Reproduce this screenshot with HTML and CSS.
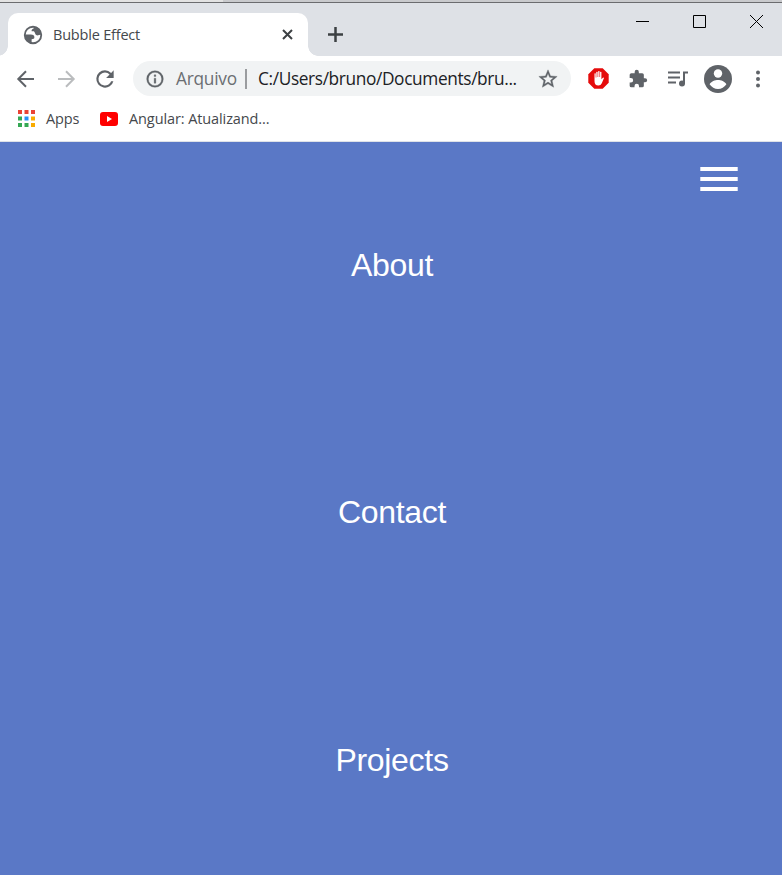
FILE: index.html
```html
<!DOCTYPE html>
<html lang="pt">
<head>
<meta charset="utf-8">
<title>Bubble Effect</title>
<link rel="stylesheet" href="styles.css">
</head>
<body>
<div class="window">
  <div class="edge"></div>
  <header class="tabstrip">
    <div class="tab">
      <svg class="globe" width="22" height="22" viewBox="0 0 24 24"><circle cx="12" cy="12" r="9" fill="none" stroke="#5f6368" stroke-width="2"/><path fill="#5f6368" d="M3 11.500h6.500c3 0 4 1 4 3.200 0 1.500-1 1.800-3 1.800v4.700A9.500 9.500 0 0 1 3 11.500zM13.500 3c.3 2.300-3.500 2-3 5h2.500c1.500 1 .8 3.500 3 4.300 2 .6 3.200-1 5.200-.3C21.200 7 18 3.500 13.500 3z"/></svg>
      <span class="tab-title">Bubble Effect</span>
      <svg class="tab-close" width="11" height="11" viewBox="0 0 11 11"><path d="M1 1l9 9M10 1l-9 9" stroke="#3c4043" stroke-width="2"/></svg>
    </div>
    <svg class="new-tab" width="15" height="15" viewBox="0 0 15 15"><path d="M7.500 0v15M0 7.500h15" stroke="#3c4043" stroke-width="2.500"/></svg>
    <div class="controls">
      <svg width="13" height="13" viewBox="0 0 13 13"><path d="M0 6.500h13" stroke="#000"/></svg>
      <svg width="13" height="13" viewBox="0 0 13 13"><path d="M.5.5h12v12H.5z" fill="none" stroke="#000"/></svg>
      <svg width="13" height="13" viewBox="0 0 13 13"><path d="M0 0l13 13M13 0L0 13" stroke="#000"/></svg>
    </div>
  </header>
  <nav class="toolbar">
    <svg class="back" width="24" height="24" viewBox="0 0 24 24"><path d="M20 12H4.800M12 4.300L4.300 12l7.700 7.700" fill="none" stroke="#5f6368" stroke-width="2"/></svg>
    <svg class="forward" width="24" height="24" viewBox="0 0 24 24"><path d="M4 12h15.200M12 4.300l7.700 7.700-7.700 7.700" fill="none" stroke="#babcbe" stroke-width="2"/></svg>
    <svg class="reload" width="26" height="26" viewBox="0 0 24 24"><path fill="#5f6368" d="M17.650 6.350A7.960 7.960 0 0 0 12 4a8 8 0 1 0 7.730 10h-2.080A6 6 0 1 1 12 6c1.660 0 3.140.69 4.220 1.780L13 11h7V4z"/></svg>
    <div class="omnibox">
      <svg class="info" width="20" height="20" viewBox="0 0 24 24"><path fill="#5f6368" stroke="#5f6368" stroke-width=".4" d="M11 7h2v2h-2zm0 4h2v6h-2zm1-9a10 10 0 1 0 0 20 10 10 0 0 0 0-20zm0 18a8 8 0 1 1 0-16 8 8 0 0 1 0 16z"/></svg>
      <span class="scheme">Arquivo</span>
      <span class="divider"></span>
      <span class="url">C:/Users/bruno/Documents/bru...</span>
      <svg class="star" width="22" height="22" viewBox="0 0 24 24"><path fill="#5f6368" stroke="#5f6368" stroke-width=".4" d="M22 9.240l-7.190-.62L12 2 9.190 8.630 2 9.240l5.460 4.730L5.820 21 12 17.270 18.180 21l-1.630-7.030zM12 15.400l-3.760 2.270 1-4.280-3.320-2.880 4.380-.38L12 6.100l1.710 4.040 4.380.38-3.320 2.880 1 4.280z"/></svg>
    </div>
    <svg class="blocker" width="21" height="21" viewBox="0 0 21 21"><path fill="#e50b0b" d="M6.300.3h8.400l6 6v8.400l-6 6H6.300l-6-6V6.300z"/><path fill="#fff" d="M6.500 5.500q.7-.7 1.200 0v4h.6V4q.7-.7 1.300 0v5h.6V3.200q.7-.6 1.300 0V9h.6V4q.7-.7 1.300 0v7.300l1.500-1.600q1-.5 1.100.3l-2.200 5.200q-1 2.300-3.400 2.300-3.900 0-3.900-4.500z"/></svg>
    <svg class="puzzle" width="20" height="20" viewBox="0 0 24 24"><path fill="#5f6368" d="M20.500 11H19V7a2 2 0 0 0-2-2h-4V3.500a2.500 2.500 0 0 0-5 0V5H4a2 2 0 0 0-2 2v3.800h1.500a2.700 2.700 0 0 1 0 5.400H2V20a2 2 0 0 0 2 2h3.800v-1.500a2.700 2.700 0 0 1 5.400 0V22H17a2 2 0 0 0 2-2v-4h1.500a2.500 2.500 0 0 0 0-5z"/></svg>
    <svg class="queue" width="20" height="16" viewBox="0 0 20 16"><path d="M0 1.500h12M0 6.500h12M0 11.500h8M16 13V1.500h4" fill="none" stroke="#5f6368" stroke-width="2"/><circle cx="14" cy="12.500" r="3" fill="#5f6368"/></svg>
    <svg class="avatar" width="28" height="28" viewBox="0 0 28 28"><circle cx="14" cy="14" r="14" fill="#5f6368"/><circle cx="14" cy="8.500" r="4.200" fill="#fff"/><path fill="#fff" d="M5.600 19.300c1.400-2.900 5.600-4.300 8.400-4.300s7 1.400 8.400 4.300q-3.200 4.700-8.400 4.700t-8.400-4.700z"/></svg>
    <svg class="more" width="4" height="18" viewBox="0 0 4 18"><g fill="#5f6368"><circle cx="2" cy="2.500" r="2"/><circle cx="2" cy="9" r="2"/><circle cx="2" cy="15.500" r="2"/></g></svg>
  </nav>
  <div class="bookmarks">
    <svg class="apps" width="17" height="17" viewBox="0 0 17 17"><path fill="#ea4335" d="M0 0h4v4H0zM6.500 0h4v4h-4zM13 0h4v4h-4z"/><path fill="#34a853" d="M0 6.500h4v4H0zM0 13h4v4H0zM6.500 13h4v4h-4z"/><path fill="#2790f5" d="M6.500 6.500h4v4h-4z"/><path fill="#f9ab00" d="M13 6.500h4v4h-4zM13 13h4v4h-4z"/></svg>
    <span class="apps-label">Apps</span>
    <svg class="youtube" width="18" height="14" viewBox="0 0 18 14"><rect width="18" height="14" rx="3" fill="#f00"/><path fill="#fff" d="M7 4l5 3-5 3z"/></svg>
    <span class="bookmark-label">Angular: Atualizand...</span>
  </div>
  <main class="page">
    <svg class="burger" width="38" height="25" viewBox="0 0 38 25"><path fill="#fff" d="M.3 1h37.400v4H.3zM.3 11h37.400v4H.3zM.3 21h37.400v4H.3z"/></svg>
    <ul class="menu">
      <li>About</li>
      <li>Contact</li>
      <li>Projects</li>
    </ul>
  </main>
</div>
</body>
</html>
```
FILE: styles.css
```css
* { box-sizing: border-box; }
body { margin: 0; font-family: "Open Sans", "Noto Sans", sans-serif; }
svg { display: block; flex: none; }
span { white-space: nowrap; }

.window { height: 875px; display: flex; flex-direction: column; overflow: hidden; background: #fff; }
.edge { height: 3px; flex: none; border-bottom: 1px solid #6b6c6f; background: linear-gradient(90deg, #e2e2e2 223px, #c9cacd 223px); }

.tabstrip { height: 53px; flex: none; display: flex; background: #dee1e6; }
.tab {
  width: 300px; height: 43px; margin: 10px 0 0 8px; position: relative;
  display: flex; align-items: center; background: #fff; border-radius: 10px 10px 0 0;
}
.tab::before, .tab::after { content: ""; position: absolute; bottom: 0; width: 10px; height: 10px; }
.tab::before { left: -10px; background: radial-gradient(circle at 0 0, transparent 9.5px, #fff 10px); }
.tab::after { right: -10px; background: radial-gradient(circle at 100% 0, transparent 9.5px, #fff 10px); }
.globe { margin-left: 14px; }
.tab-title { width: 90px; margin-left: 9px; font-size: 14.5px; letter-spacing: -0.2px; color: #45484c; }
.tab-close { margin: 0 15px 0 auto; }
.new-tab { margin: 24px 0 0 20px; }
.controls { display: flex; gap: 44px; margin: 12px 19px 0 auto; }

.toolbar { height: 45px; flex: none; display: flex; align-items: center; }
.back { margin-left: 14px; }
.forward { margin-left: 16px; }
.reload { margin-left: 14px; }
.omnibox {
  width: 438px; height: 35px; margin-left: 15px; display: flex; align-items: center;
  background: #f1f3f4; border-radius: 18px; font-size: 17.3px;
}
.info { margin-left: 12px; }
.scheme { width: 61px; margin-left: 11px; letter-spacing: -0.25px; color: #6b6e72; }
.divider { width: 2px; height: 20px; margin-left: 8px; background: #9a9c9f; }
.url { width: 260px; margin-left: 11px; letter-spacing: -0.37px; color: #202124; }
.star { margin-left: 19px; }
.blocker { margin-left: 17px; }
.puzzle { margin-left: 19px; }
.queue { margin-left: 20px; }
.avatar { margin-left: 16px; }
.more { margin-left: 24px; }

.bookmarks { height: 41px; flex: none; display: flex; align-items: center; padding-bottom: 5px; border-bottom: 1px solid #dfe2e7; font-size: 14.5px; color: #45484c; }
.apps { margin-left: 18px; }
.apps-label { width: 34px; margin-left: 11px; letter-spacing: -0.1px; }
.youtube { margin-left: 20px; }
.bookmark-label { margin-left: 11px; letter-spacing: -0.1px; }

.page { flex: 1; display: flex; flex-direction: column; background: #5a78c6; font-family: "Liberation Sans", Arial, sans-serif; }
.burger { align-self: flex-end; margin: 24px 44px 0 0; }
.menu { margin: 56px 0 0; padding: 0 0 0 2px; list-style: none; color: #fff; font-size: 32px; letter-spacing: -0.3px; line-height: 36px; text-align: center; }
.menu li { height: 247.4px; }
```
